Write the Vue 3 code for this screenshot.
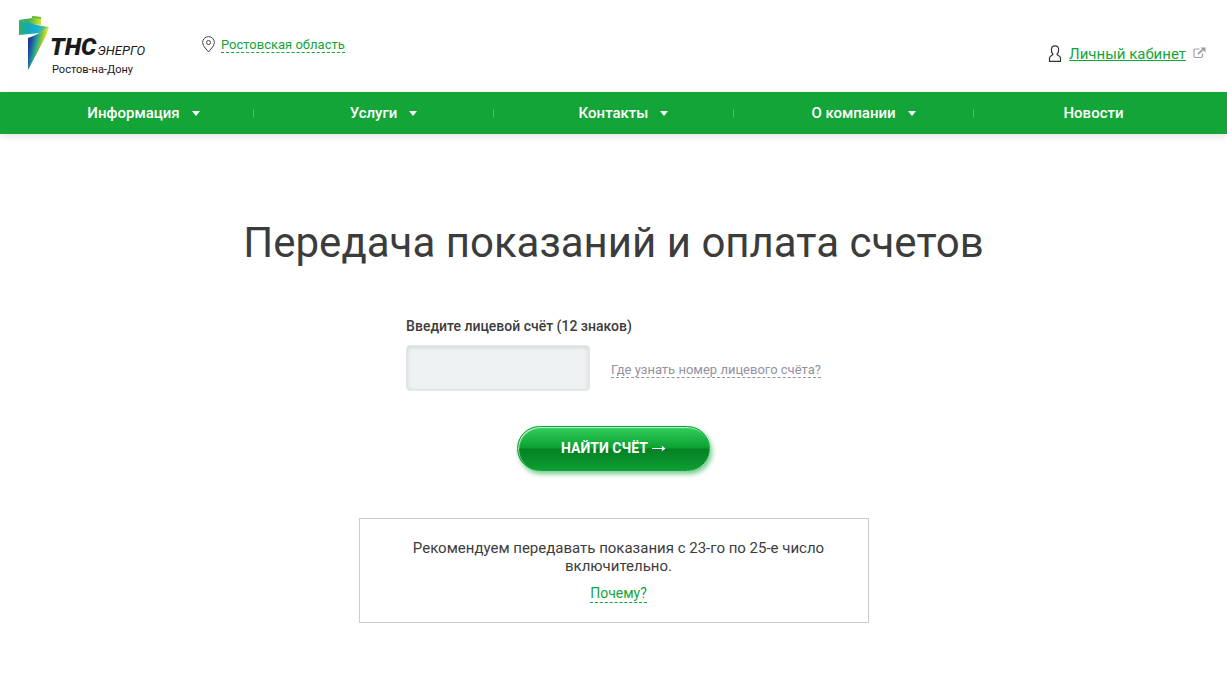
<script setup>
import { ref } from 'vue'

const account = ref('')
const menu = [
  { title: 'Информация', sub: true },
  { title: 'Услуги', sub: true },
  { title: 'Контакты', sub: true },
  { title: 'О компании', sub: true },
  { title: 'Новости', sub: false },
]
</script>

<template>
  <div class="page">
    <header class="header">
      <a class="logo" href="#">
        <svg class="logo-mark" width="32" height="56" viewBox="0 0 32 56" aria-hidden="true">
          <defs>
            <linearGradient id="top" x1="0" x2="1" y1="0" y2="0">
              <stop offset="0" stop-color="#16a08c" />
              <stop offset="0.5" stop-color="#4db54f" />
              <stop offset="1" stop-color="#e0e32a" />
            </linearGradient>
            <linearGradient id="ribbon" x1="0" x2="1" y1="0" y2="0">
              <stop offset="0" stop-color="#2bb35a" />
              <stop offset="0.25" stop-color="#17a8b0" />
              <stop offset="0.6" stop-color="#1aaed2" />
              <stop offset="0.8" stop-color="#4fbf8c" />
              <stop offset="1" stop-color="#c9dc30" />
            </linearGradient>
            <linearGradient id="leg" gradientUnits="userSpaceOnUse" x1="10" x2="29" y1="26" y2="30">
              <stop offset="0" stop-color="#252e86" />
              <stop offset="0.2" stop-color="#1f57a8" />
              <stop offset="0.42" stop-color="#26a58c" />
              <stop offset="0.65" stop-color="#8cc63f" />
              <stop offset="0.85" stop-color="#e6e52b" />
            </linearGradient>
          </defs>
          <path d="M1 4 L14 2 L14 0 L23 1 L23 9 L12 8Z" fill="url(#top)" />
          <path d="M14 0 L23 1 L23 3 L14 2Z" fill="#6dbd45" />
          <path d="M1 4 Q12 8 31 11 L22 17 L1 19Z" fill="url(#ribbon)" />
          <path d="M31 11 L28 20 L10 54 L10 22 Q22 18 31 11Z" fill="url(#leg)" />
        </svg>
        <span class="logo-text">
          <span class="logo-name"><b>ТНС</b><i>ЭНЕРГО</i></span>
          <span class="logo-city">Ростов-на-Дону</span>
        </span>
      </a>
      <div class="region">
        <svg width="13" height="17" viewBox="0 0 13 17" fill="none" stroke="#444" aria-hidden="true">
          <path d="M6.5 16 C5.5 14 .6 10.500 .6 6.500 A5.900 5.900 0 0 1 12.400 6.500 C12.400 10.500 7.500 14 6.500 16Z" />
          <circle cx="6.500" cy="6.500" r="2" />
        </svg>
        <a class="dashed" href="#">Ростовская область</a>
      </div>
      <div class="cabinet">
        <svg width="14" height="18" viewBox="0 0 14 18" fill="none" stroke="#333" stroke-width="1.200" aria-hidden="true">
          <path d="M7 .8 C4.400 .8 3.400 2.500 3.400 4.800 C3.400 6.800 4 8.300 5 9.300 C4.800 10.600 1.500 10.800 1.500 13 V16.400 H12.500 V13 C12.500 10.800 9.200 10.600 9 9.300 C10 8.300 10.600 6.800 10.600 4.800 C10.600 2.500 9.600 .8 7 .8Z" />
        </svg>
        <a href="#">Личный кабинет</a>
        <svg class="external" width="13" height="12" viewBox="0 0 13 12" fill="none" stroke="#9aa0a6" aria-hidden="true">
          <path d="M6.500 2 H2.500 Q1 2 1 3.500 V9 Q1 10.500 2.500 10.500 H8 Q9.500 10.500 9.500 9 V6.500" stroke-width="1.200" />
          <path d="M5 7 L10.500 2" stroke-width="1.700" />
          <path d="M7.500 .5 H12.500 V5.500Z" fill="#9aa0a6" stroke="none" />
        </svg>
      </div>
    </header>

    <nav class="nav">
      <ul class="menu">
        <li v-for="item in menu" :key="item.title">
          <a href="#" :class="{ sub: item.sub }">{{ item.title }}</a>
        </li>
      </ul>
    </nav>

    <main class="main">
      <h1>Передача показаний и оплата счетов</h1>
      <form class="form" @submit.prevent>
        <div class="field">
          <label for="account">Введите лицевой счёт (12 знаков)</label>
          <div class="row">
            <input id="account" v-model="account" type="text" maxlength="12" />
            <a class="dashed hint" href="#">Где узнать номер лицевого счёта?</a>
          </div>
        </div>
        <button type="submit">
          НАЙТИ СЧЁТ
          <svg width="14" height="8" viewBox="0 0 14 8" fill="none" stroke="#fff" aria-hidden="true">
            <path d="M0 4.500 H12" />
            <path d="M9.500 1.500 L13.500 4.500 L9.500 7.500 L10.500 4.500Z" fill="#fff" stroke="none" />
          </svg>
        </button>
      </form>
      <div class="note">
        <p>Рекомендуем передавать показания с 23-го по 25-е число включительно.</p>
        <a class="dashed why" href="#">Почему?</a>
      </div>
    </main>
  </div>
</template>

<style>
body {
  margin: 0;
  background: #fff;
}
</style>

<style scoped>
.page {
  font-family: Roboto, "Liberation Sans", sans-serif;
  font-size: 14px;
  color: #3c3c3c;
}
a {
  color: #14a538;
}
.dashed {
  text-decoration: none;
  border-bottom: 1px dashed currentColor;
}
.header {
  display: flex;
  align-items: flex-start;
  height: 92px;
  padding: 0 21px 0 18px;
  box-sizing: border-box;
}
.logo {
  display: flex;
  width: 184px;
  padding-top: 16px;
  color: #1a1a1a;
  text-decoration: none;
}
.logo-text {
  display: flex;
  flex-direction: column;
  padding-top: 18px;
}
.logo-name {
  display: flex;
  align-items: baseline;
  gap: 1px;
  line-height: 26px;
}
.logo-name b {
  font-size: 24px;
  font-weight: 900;
  font-style: italic;
}
.logo-name i {
  font-size: 13px;
}
.logo-city {
  padding-left: 2px;
  font-size: 11px;
  line-height: 12px;
}
.region {
  display: flex;
  align-items: center;
  gap: 6px;
  padding-top: 36px;
  font-size: 13px;
  line-height: 15px;
}
.cabinet {
  display: flex;
  align-items: center;
  gap: 7px;
  margin-left: auto;
  padding-top: 44px;
  font-size: 15px;
  line-height: 20px;
}
.external {
  margin-bottom: 2px;
}
.nav {
  background: #14a538;
  box-shadow: 0 2px 8px rgba(0, 0, 0, 0.12);
}
.menu {
  display: grid;
  grid-template-columns: repeat(5, 1fr);
  max-width: 1200px;
  margin: 0 auto;
  padding: 0;
  list-style: none;
}
.menu li {
  display: flex;
  align-items: center;
  justify-content: center;
  position: relative;
  height: 42px;
}
.menu li:not(:last-child)::after {
  content: "";
  position: absolute;
  right: 0;
  width: 1px;
  height: 8px;
  background: #45c966;
}
.menu a {
  display: flex;
  align-items: center;
  font-size: 15px;
  font-weight: 500;
  color: #fff;
  text-decoration: none;
}
.menu .sub {
  padding-left: 20px;
}
.menu .sub::after {
  content: "";
  margin-left: 12px;
  border: 4px solid transparent;
  border-top: 5px solid #fff;
  border-bottom: 0;
}
.main {
  display: flex;
  flex-direction: column;
  align-items: center;
  padding: 84px 20px 52px;
}
h1 {
  margin: 0;
  font-size: 42px;
  line-height: 50px;
  font-weight: 400;
  text-align: center;
}
.form {
  display: flex;
  flex-direction: column;
  align-items: center;
  margin-top: 48px;
}
.field label {
  display: block;
  font-weight: 500;
  line-height: 20px;
}
.row {
  display: flex;
  align-items: center;
  gap: 21px;
  margin-top: 9px;
}
input {
  width: 184px;
  height: 46px;
  padding: 0 12px;
  box-sizing: border-box;
  border: 1px solid #e2e7e7;
  border-radius: 4px;
  background: #eef2f3;
  box-shadow: inset 0 1px 5px rgba(0, 0, 0, 0.13);
  font: inherit;
}
.hint {
  margin-top: 4px;
  font-size: 13px;
  line-height: 15px;
  color: #9292a0;
}
button {
  display: flex;
  align-items: center;
  justify-content: center;
  gap: 4px;
  width: 193px;
  height: 45px;
  margin-top: 35px;
  padding: 0 0 1px;
  border: 1px solid #14a038;
  border-radius: 23px;
  background: linear-gradient(#34cf5c 0%, #0aa032 49%, #067f24 51%, #0c9e33 100%);
  box-shadow: inset 1px 1px 1px #c4f0ce, 2px 3px 5px rgba(20, 165, 56, 0.6);
  font-family: inherit;
  font-size: 14px;
  font-weight: 700;
  color: #fff;
}
.note {
  width: 100%;
  max-width: 510px;
  box-sizing: border-box;
  margin-top: 47px;
  padding: 20px 40px 19px 50px;
  border: 1px solid #ccc;
  text-align: center;
}
.note p {
  margin: 0 0 9px;
  font-size: 15px;
  line-height: 18px;
}
.why {
  display: inline-block;
  line-height: 18px;
}
</style>
